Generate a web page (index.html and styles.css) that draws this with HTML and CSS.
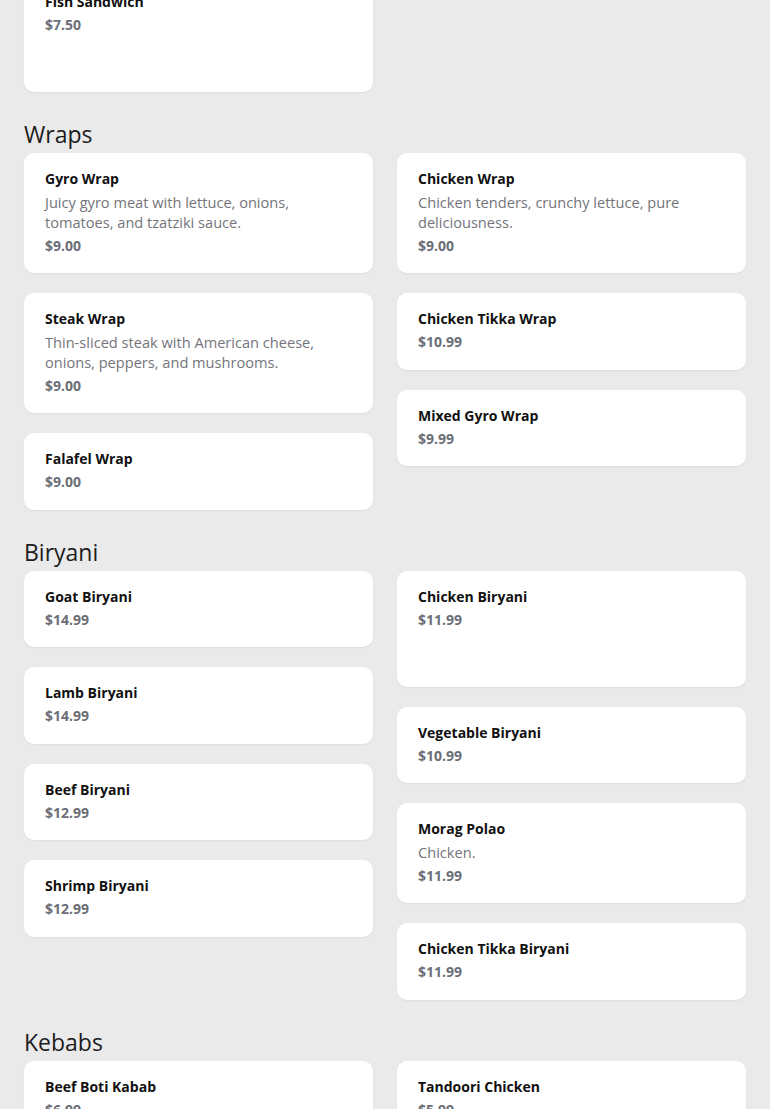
FILE: index.html
```html
<!DOCTYPE html>
<html lang="en">
<head>
<meta charset="utf-8">
<title>Menu</title>
<link rel="stylesheet" href="styles.css">
</head>
<body>
<main class="menu">
  <section class="section section-first">
    <div class="cols">
      <div class="col">
        <div class="card">
          <div class="name">Fish Sandwich</div>
          <div class="price">$7.50</div>
          <div class="spacer"></div>
        </div>
      </div>
      <div class="col"></div>
    </div>
  </section>

  <section class="section">
    <h2 class="heading">Wraps</h2>
    <div class="cols">
      <div class="col">
        <div class="card">
          <div class="name">Gyro Wrap</div>
          <div class="desc">Juicy gyro meat with lettuce, onions, tomatoes, and tzatziki sauce.</div>
          <div class="price">$9.00</div>
        </div>
        <div class="card">
          <div class="name">Steak Wrap</div>
          <div class="desc">Thin-sliced steak with American cheese, onions, peppers, and mushrooms.</div>
          <div class="price">$9.00</div>
        </div>
        <div class="card">
          <div class="name">Falafel Wrap</div>
          <div class="price">$9.00</div>
        </div>
      </div>
      <div class="col">
        <div class="card">
          <div class="name">Chicken Wrap</div>
          <div class="desc">Chicken tenders, crunchy lettuce, pure deliciousness.</div>
          <div class="price">$9.00</div>
        </div>
        <div class="card">
          <div class="name">Chicken Tikka Wrap</div>
          <div class="price">$10.99</div>
        </div>
        <div class="card">
          <div class="name">Mixed Gyro Wrap</div>
          <div class="price">$9.99</div>
        </div>
      </div>
    </div>
  </section>

  <section class="section">
    <h2 class="heading">Biryani</h2>
    <div class="cols">
      <div class="col">
        <div class="card">
          <div class="name">Goat Biryani</div>
          <div class="price">$14.99</div>
        </div>
        <div class="card">
          <div class="name">Lamb Biryani</div>
          <div class="price">$14.99</div>
        </div>
        <div class="card">
          <div class="name">Beef Biryani</div>
          <div class="price">$12.99</div>
        </div>
        <div class="card">
          <div class="name">Shrimp Biryani</div>
          <div class="price">$12.99</div>
        </div>
      </div>
      <div class="col">
        <div class="card">
          <div class="name">Chicken Biryani</div>
          <div class="price">$11.99</div>
          <div class="spacer"></div>
        </div>
        <div class="card">
          <div class="name">Vegetable Biryani</div>
          <div class="price">$10.99</div>
        </div>
        <div class="card">
          <div class="name">Morag Polao</div>
          <div class="desc">Chicken.</div>
          <div class="price">$11.99</div>
        </div>
        <div class="card">
          <div class="name">Chicken Tikka Biryani</div>
          <div class="price">$11.99</div>
        </div>
      </div>
    </div>
  </section>

  <section class="section">
    <h2 class="heading">Kebabs</h2>
    <div class="cols">
      <div class="col">
        <div class="card">
          <div class="name">Beef Boti Kabab</div>
          <div class="price">$6.99</div>
        </div>
      </div>
      <div class="col">
        <div class="card">
          <div class="name">Tandoori Chicken</div>
          <div class="price">$5.99</div>
        </div>
      </div>
    </div>
  </section>
</main>
</body>
</html>
```

FILE: styles.css
```css
* {
  box-sizing: border-box;
}

html, body {
  margin: 0;
  padding: 0;
  background: #eaeaea;
}

body {
  font-family: "Open Sans", "Liberation Sans", sans-serif;
  color: #111;
}

.menu {
  padding: 0 24px 40px;
  margin-top: -24px;
}

.section {
  padding-top: 28px;
}

.section-first {
  padding-top: 0;
}

.heading {
  margin: 0 0 4px;
  font-size: 23px;
  line-height: 29px;
  font-weight: 400;
  color: #1c1c1c;
}

.cols {
  display: grid;
  grid-template-columns: 1fr 1fr;
  column-gap: 24px;
  align-items: start;
}

.col {
  display: flex;
  flex-direction: column;
  gap: 20px;
}

.card {
  background: #fff;
  border-radius: 10px;
  padding: 16px 20px 17.5px 21px;
  box-shadow: 0 1px 2px rgba(0, 0, 0, 0.06);
  display: flex;
  flex-direction: column;
  gap: 3px;
}

.name {
  font-size: 14px;
  line-height: 20px;
  font-weight: 700;
  color: #111;
}

.desc {
  font-size: 14.6px;
  line-height: 20px;
  color: #74747a;
  margin-bottom: 0.5px;
}

.price {
  font-size: 14px;
  line-height: 20px;
  font-weight: 700;
  color: #6b6e76;
}

.spacer {
  height: 36.5px;
}
```
